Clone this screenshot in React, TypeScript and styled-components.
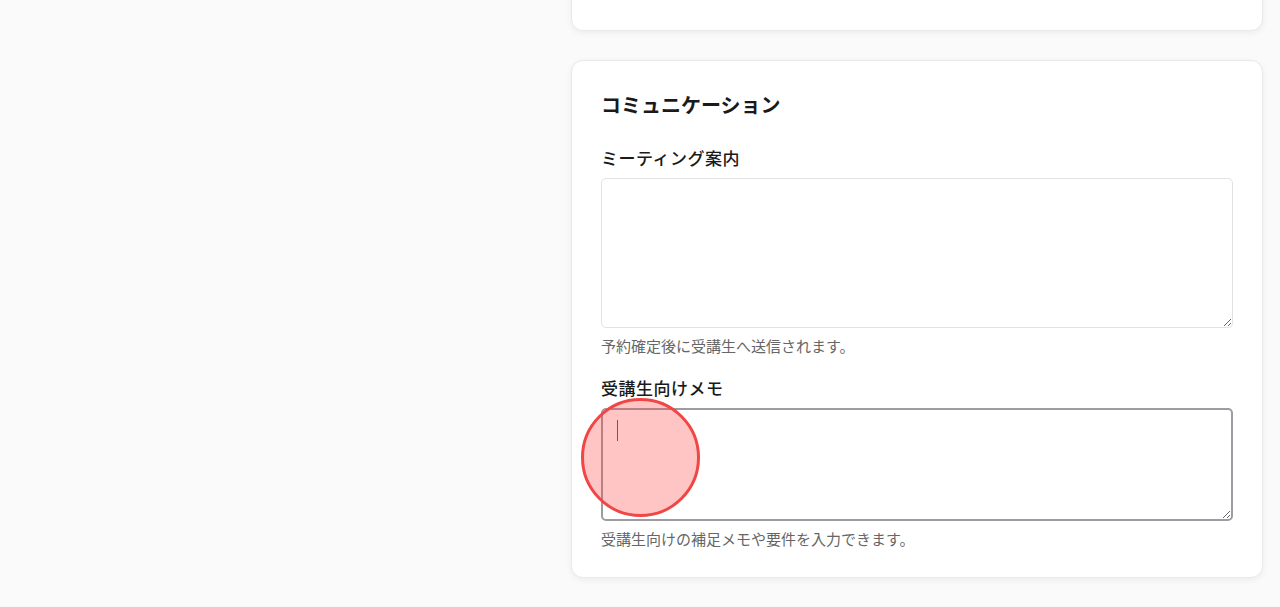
import React from 'react';
import styled, {createGlobalStyle} from 'styled-components';

const GlobalStyle = createGlobalStyle`
  * {
    box-sizing: border-box;
  }

  html, body {
    margin: 0;
    height: 100%;
    overflow: hidden;
    background-color: #fafafa;
    font-family: "Noto Sans CJK JP", "Noto Sans", sans-serif;
    color: #1a1a1a;
  }
`

const Page = styled.div`
  display: grid;
  grid-template-columns: 1fr 692px;
  column-gap: 30px;
  padding-right: 17px;
  height: 607px;
`

const Column = styled.div`
  display: flex;
  flex-direction: column;
  gap: 29px;
  margin-top: -29px;
`

const Card = styled.section<{ $height?: number }>`
  position: relative;
  background-color: #ffffff;
  border: 1px solid #e9e9e9;
  border-radius: 12px;
  box-shadow: 0 2px 6px rgba(0, 0, 0, 0.06);
  padding: 28px 29px 28px;
  ${({$height}) => $height ? `height: ${$height}px;` : ''}
`

const Heading = styled.h2`
  margin: 0 0 25px;
  font-size: 20px;
  font-weight: 700;
  line-height: 32px;
`

const Field = styled.div`
  display: flex;
  flex-direction: column;
  & + & {
    margin-top: 20px;
  }
`

const Label = styled.label`
  font-size: 17px;
  font-weight: 500;
  line-height: 24px;
  letter-spacing: 0.5px;
  margin-bottom: 8px;
`

const InputBox = styled.div`
  position: relative;
`

const TextArea = styled.textarea<{ $rows: number }>`
  display: block;
  width: 100%;
  height: ${({$rows}) => $rows}px;
  padding: 11px 13px;
  border: 1px solid #e2e2e2;
  border-radius: 5px;
  font-family: inherit;
  font-size: 15px;
  color: #333;
  background: #fff;
  resize: vertical;
  outline: none;

  &:focus {
    border: 2px solid #9c9ca2;
    padding: 10px 12px;
  }
`

const Caret = styled.span`
  position: absolute;
  left: 16px;
  top: 12px;
  width: 1px;
  height: 21px;
  background-color: #555;
  pointer-events: none;
`

const Help = styled.p`
  margin: 7px 0 0;
  font-size: 15px;
  line-height: 21px;
  color: #666;
`

const Tap = styled.div`
  position: absolute;
  left: 9px;
  top: 337px;
  width: 119px;
  height: 119px;
  border-radius: 50%;
  background-color: rgba(255, 60, 60, 0.3);
  border: 3px solid #f04646;
  pointer-events: none;
`

const App = () => {
    return (
        <>
            <GlobalStyle/>
            <Page>
                <div/>
                <Column>
                    <Card $height={60}/>
                    <Card>
                        <Heading>コミュニケーション</Heading>
                        <Field>
                            <Label htmlFor="meeting">ミーティング案内</Label>
                            <InputBox>
                                <TextArea id="meeting" $rows={150}/>
                            </InputBox>
                            <Help>予約確定後に受講生へ送信されます。</Help>
                        </Field>
                        <Field>
                            <Label htmlFor="memo">受講生向けメモ</Label>
                            <InputBox>
                                <TextArea id="memo" $rows={113} autoFocus/>
                                <Caret/>
                            </InputBox>
                            <Help>受講生向けの補足メモや要件を入力できます。</Help>
                        </Field>
                        <Tap/>
                    </Card>
                </Column>
            </Page>
        </>
    );
};

export default App;
